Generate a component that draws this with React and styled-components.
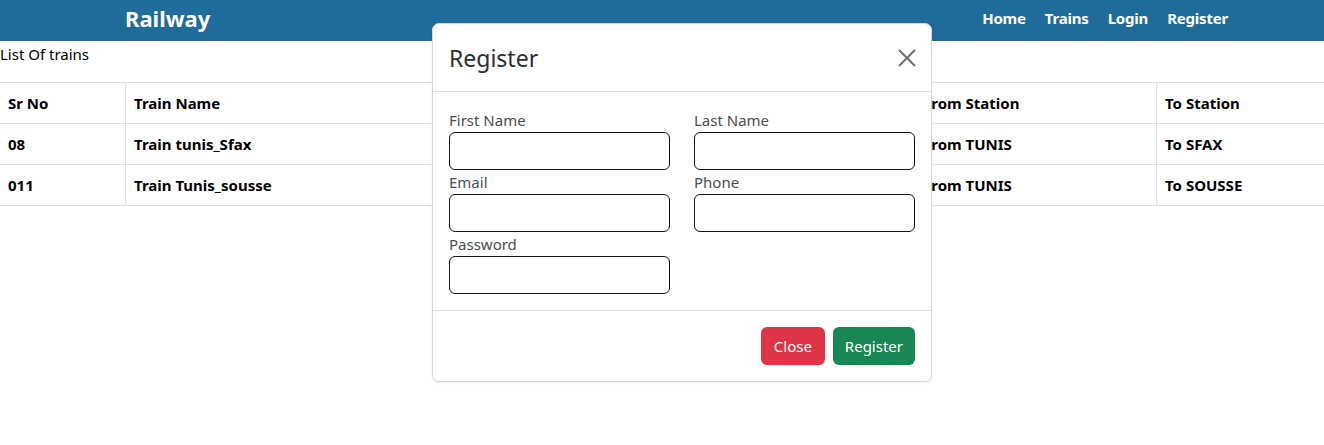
import React from "react";
import styled, { createGlobalStyle } from "styled-components";

const Global = createGlobalStyle`
  * { box-sizing: border-box; }
  body {
    margin: 0;
    font-family: "Noto Sans", "Open Sans", sans-serif;
    color: #000;
    background: #fff;
  }
`;

const Page = styled.div`
  position: relative;
  width: 1324px;
  height: 445px;
  overflow: hidden;
`;

const Navbar = styled.nav`
  height: 41px;
  background: #1f6b99;
  display: flex;
  align-items: center;
  justify-content: space-between;
  padding: 0 96px 5px 125px;
`;

const Brand = styled.span`
  color: #fff;
  font-size: 22px;
  font-weight: 700;
  line-height: 30px;
`;

const NavLinks = styled.div`
  display: flex;
  gap: 19px;
`;

const NavLink = styled.a`
  color: #fff;
  font-size: 15px;
  font-weight: 700;
  letter-spacing: -0.2px;
  text-decoration: none;
`;

const Caption = styled.p`
  margin: 0;
  height: 41px;
  padding-top: 2px;
  font-size: 15px;
  line-height: 22px;
`;

const Table = styled.div`
  display: grid;
  grid-template-columns: 125px 789px 242px 1fr;
  border-top: 1px solid #dee2e6;
`;

const Cell = styled.div`
  height: 41px;
  padding: 0 8px;
  display: flex;
  align-items: center;
  font-size: 15px;
  font-weight: 700;
  border-bottom: 1px solid #dee2e6;
  border-left: ${(p) => (p.$first ? "none" : "1px solid #dee2e6")};
`;

const Modal = styled.div`
  position: absolute;
  left: 432px;
  top: 23px;
  width: 500px;
  background: #fff;
  border: 1px solid #d3d5d8;
  border-radius: 7px;
  box-shadow: 0 1px 3px rgba(0, 0, 0, 0.06);
  display: flex;
  flex-direction: column;
`;

const Header = styled.div`
  display: flex;
  align-items: center;
  justify-content: space-between;
  padding: 16px;
  border-bottom: 1px solid #dee2e6;
`;

const Title = styled.h5`
  margin: 0;
  font-size: 23px;
  font-weight: 400;
  line-height: 35px;
  color: #2b2f33;
  position: relative;
  top: 1px;
`;

const CloseX = styled.button`
  border: 0;
  background: none;
  padding: 0;
  width: 20px;
  height: 20px;
  margin-right: -2px;
  display: flex;
  align-items: center;
  justify-content: center;
`;

const Body = styled.div`
  padding: 16px;
  display: grid;
  grid-template-columns: minmax(0, 1fr) minmax(0, 1fr);
  column-gap: 24px;
`;

const Field = styled.div`
  display: flex;
  flex-direction: column;
  min-width: 0;
`;

const Label = styled.label`
  font-size: 15px;
  line-height: 24px;
  height: 24px;
  color: #4a4d51;
`;

const Input = styled.input`
  width: 100%;
  height: 38px;
  border: 1px solid #111;
  border-radius: 6px;
  font: inherit;
  padding: 0 12px;
`;

const Footer = styled.div`
  border-top: 1px solid #dee2e6;
  padding: 16px;
  display: flex;
  justify-content: flex-end;
  gap: 8px;
`;

const Button = styled.button`
  height: 38px;
  padding: 0 ${(p) => p.$px || 12}px;
  border: 0;
  border-radius: 6px;
  font: inherit;
  font-size: 15px;
  color: #fff;
  background: ${(p) => p.$bg};
`;

const columns = ["Sr No", "Train Name", "From Station", "To Station"];
const trains = [
  ["08", "Train tunis_Sfax", "From TUNIS", "To SFAX"],
  ["011", "Train Tunis_sousse", "From TUNIS", "To SOUSSE"],
];

const fields = ["First Name", "Last Name", "Email", "Phone", "Password"];

export default function App() {
  return (
    <Page>
      <Global />
      <Navbar>
        <Brand>Railway</Brand>
        <NavLinks>
          <NavLink href="#">Home</NavLink>
          <NavLink href="#">Trains</NavLink>
          <NavLink href="#">Login</NavLink>
          <NavLink href="#">Register</NavLink>
        </NavLinks>
      </Navbar>
      <Caption>List Of trains</Caption>
      <Table>
        {columns.map((c, i) => (
          <Cell key={c} $first={i === 0}>{c}</Cell>
        ))}
        {trains.map((row) =>
          row.map((v, i) => (
            <Cell key={row[0] + i} $first={i === 0}>{v}</Cell>
          ))
        )}
      </Table>

      <Modal>
        <Header>
          <Title>Register</Title>
          <CloseX aria-label="Close">
            <svg width="18" height="18" viewBox="0 0 18 18">
              <path d="M1 1 L17 17 M17 1 L1 17" stroke="#6c6f73" strokeWidth="2" />
            </svg>
          </CloseX>
        </Header>
        <Body>
          {fields.map((f) => (
            <Field key={f}>
              <Label>{f}</Label>
              <Input type={f === "Password" ? "password" : "text"} />
            </Field>
          ))}
        </Body>
        <Footer>
          <Button $bg="#dc3545" $px={13}>Close</Button>
          <Button $bg="#198754">Register</Button>
        </Footer>
      </Modal>
    </Page>
  );
}
